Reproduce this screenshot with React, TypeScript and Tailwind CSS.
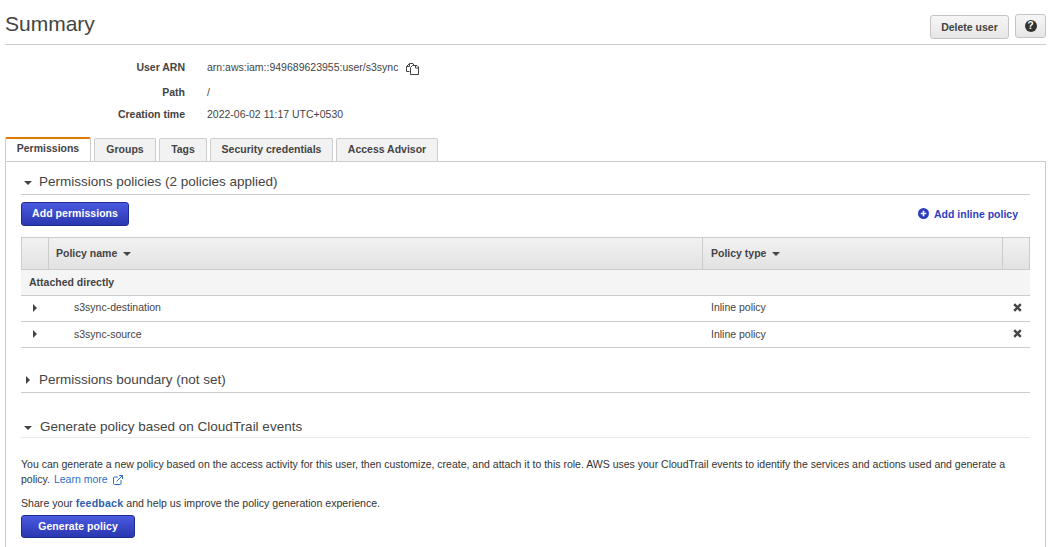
import React from 'react';
import { ExternalLink } from 'lucide-react';

const INFO_ROWS = [
  { label: 'User ARN', value: 'arn:aws:iam::949689623955:user/s3sync', copy: true, height: 'h-[24px]' },
  { label: 'Path', value: '/', height: 'h-[24px] pt-[1px]' },
  { label: 'Creation time', value: '2022-06-02 11:17 UTC+0530', height: 'h-[22.500px]' },
];

const TABS = [
  { name: 'Groups', width: 'w-[62px]' },
  { name: 'Tags', width: 'w-[48px]' },
  { name: 'Security credentials', width: 'w-[123px]' },
  { name: 'Access Advisor', width: 'w-[102px]' },
];

const POLICIES = ['s3sync-destination', 's3sync-source'];

const Caret = ({ open, className = '' }: { open?: boolean; className?: string }) => (
  <svg width="8" height="8" viewBox="0 0 8 8" className={className}>
    {open ? <path d="M0 2h8L4 6z" fill="#444" /> : <path d="M2 0l4 4-4 4z" fill="#444" />}
  </svg>
);

const CopyIcon = () => (
  <svg width="13" height="13" viewBox="0 0 13 13" fill="none" stroke="#444" strokeWidth="1">
    <path d="M3.500 9.500H.5V4.500l3-3h3.500l1 2" />
    <path d="M3.500 1.500v3h-3" />
    <path d="M4.500 5.500l2-2h4.500l1.500 1.500v7.500H4.500z" fill="#fff" />
    <path d="M9.500 3.500v2.500h3" />
  </svg>
);

const PrimaryButton = ({ label, size }: { label: string; size: string }) => (
  <button
    className={`${size} rounded-[3px] border border-[#1f2d8f] bg-gradient-to-b from-[#4a5ae0] to-[#2a37b0] text-[10.500px] font-bold tracking-[0.05px] text-white`}
  >
    {label}
  </button>
);

const Remove = () => (
  <svg width="9" height="9" viewBox="0 0 9 9" className="mr-[8px] mb-[2px]">
    <path d="M1.200 1.200l6.600 6.600M7.800 1.200l-6.600 6.600" stroke="#444" strokeWidth="2.400" />
  </svg>
);

export default function App() {
  return (
    <div className="h-[547px] w-[1051px] overflow-hidden bg-white px-[5px] font-['Liberation_Sans',Arial,sans-serif] text-[10.500px] text-[#444]">
      {/* Header */}
      <div className="flex h-[45px] items-start justify-between border-b border-[#ccc] pt-[11px]">
        <h1 className="text-[21px] leading-[26px] text-[#444]">Summary</h1>
        <div className="flex gap-[6px] pt-[4px]">
          <button className="h-[24px] w-[79px] rounded-[3px] border border-[#c4c4c4] bg-gradient-to-b from-[#f6f6f6] to-[#e6e6e6] pt-[1px] text-[10.500px] font-bold text-[#444]">
            Delete user
          </button>
          <button className="-mt-[1px] flex h-[24px] w-[31px] items-center justify-center rounded-[3px] border border-[#c4c4c4] bg-gradient-to-b from-[#f6f6f6] to-[#e6e6e6]">
            <span className="flex h-[12px] w-[12px] items-center justify-center rounded-full bg-[#333] text-[10px] leading-none font-bold text-white">?</span>
          </button>
        </div>
      </div>

      {/* Info */}
      <div className="pt-[11px]">
        {INFO_ROWS.map((row) => (
          <div key={row.label} className={`${row.height} flex items-center`}>
            <div className="w-[180px] text-right font-bold">{row.label}</div>
            <div className="ml-[22px] flex items-center">
              {row.value}
              {row.copy && <span className="ml-[8px] flex"><CopyIcon /></span>}
            </div>
          </div>
        ))}
      </div>

      {/* Tabs */}
      <div className="mt-[11px] flex h-[23px] items-end gap-[3px]">
        <div className="z-10 flex h-[24px] w-[86px] items-center justify-center rounded-t-[2px] border-x border-t-2 border-x-[#ccc] border-t-[#e07b00] bg-white pb-[2px] font-bold">
          Permissions
        </div>
        {TABS.map((tab) => (
          <div
            key={tab.name}
            className={`${tab.width} flex h-[23px] items-center justify-center rounded-t-[2px] border-x border-t border-[#ccc] bg-[#f2f2f2] font-bold`}
          >
            {tab.name}
          </div>
        ))}
      </div>

      {/* Panel */}
      <div className="h-[400px] border border-[#ccc] px-[15px]">
        <div className="flex h-[33px] items-center gap-[7px] border-b border-[#ccc] pt-[10px] pl-[3px] text-[13.500px]">
          <Caret open />
          <span>Permissions policies (2 policies applied)</span>
        </div>

        <div className="mt-[7px] flex items-center justify-between">
          <PrimaryButton label="Add permissions" size="h-[24px] w-[108px]" />
          <div className="mr-[12px] flex items-center gap-[5px] pt-[2px] font-bold text-[#2f3ec0]">
            <svg width="11" height="11" viewBox="0 0 11 11" className="-mt-[2px]">
              <circle cx="5.500" cy="5.500" r="5.500" fill="#2f3ec0" />
              <path d="M5.500 2.800v5.400M2.800 5.500h5.400" stroke="#fff" strokeWidth="1.600" />
            </svg>
            Add inline policy
          </div>
        </div>

        {/* Policies table */}
        <div className="mt-[11px]">
          <div className="grid h-[33px] grid-cols-[26px_654px_300px_1fr] border border-[#ccc] bg-gradient-to-b from-[#f2f2f2] to-[#e2e2e2] font-bold">
            <div />
            <div className="flex items-center gap-[6px] border-l border-[#ccc] pt-[1px] pl-[7px]">
              Policy name <Caret open />
            </div>
            <div className="flex items-center gap-[6px] border-l border-[#ccc] pt-[1px] pl-[8px]">
              Policy type <Caret open />
            </div>
            <div className="border-l border-[#ccc]" />
          </div>
          <div className="flex h-[26px] items-center border-b border-[#ccc] bg-[#f5f5f5] pt-[1px] pl-[8px] font-bold">
            Attached directly
          </div>
          {POLICIES.map((name, index) => (
            <div key={name} className="grid h-[26px] grid-cols-[27px_654px_300px_1fr] items-center border-b border-[#ccc]">
              <div className="flex justify-center pl-[1px]"><Caret /></div>
              <div className={`pl-[26px] ${index === 1 ? 'pt-[2px]' : ''}`}>{name}</div>
              <div className={`pl-[9px] ${index === 1 ? 'pt-[2px]' : ''}`}>Inline policy</div>
              <div className="flex justify-end"><Remove /></div>
            </div>
          ))}
        </div>

        <div className="mt-[18px] flex h-[27px] items-center gap-[7px] border-b border-[#ccc] pt-[3px] pl-[3px] text-[13.500px]">
          <Caret />
          <span>Permissions boundary (not set)</span>
        </div>

        <div className="mt-[21px] flex h-[24px] items-center gap-[8px] border-b border-[#eaeaea] pt-[5px] pl-[3px] text-[13.500px]">
          <Caret open />
          <span>Generate policy based on CloudTrail events</span>
        </div>

        <p className="mt-[19px] text-[10.500px] leading-[15px] text-[#333]">
          You can generate a new policy based on the access activity for this user, then customize, create, and attach it to this role. AWS uses your CloudTrail events to identify the services and actions used and generate a policy.{' '}
          <span className="ml-[1px] text-[#2a6fc9]">Learn more</span>
          <ExternalLink className="ml-[4px] inline h-[12px] w-[12px] text-[#2a6fc9]" />
        </p>
        <p className="mt-[9px] text-[10.600px] leading-[15px] text-[#333]">
          Share your <span className="font-bold tracking-[0.2px] text-[#2a5fb0]">feedback</span> and help us improve the policy generation experience.
        </p>
        <div className="mt-[4px]">
          <PrimaryButton label="Generate policy" size="h-[23px] w-[114px] pt-[1px]" />
        </div>
      </div>
    </div>
  );
}
